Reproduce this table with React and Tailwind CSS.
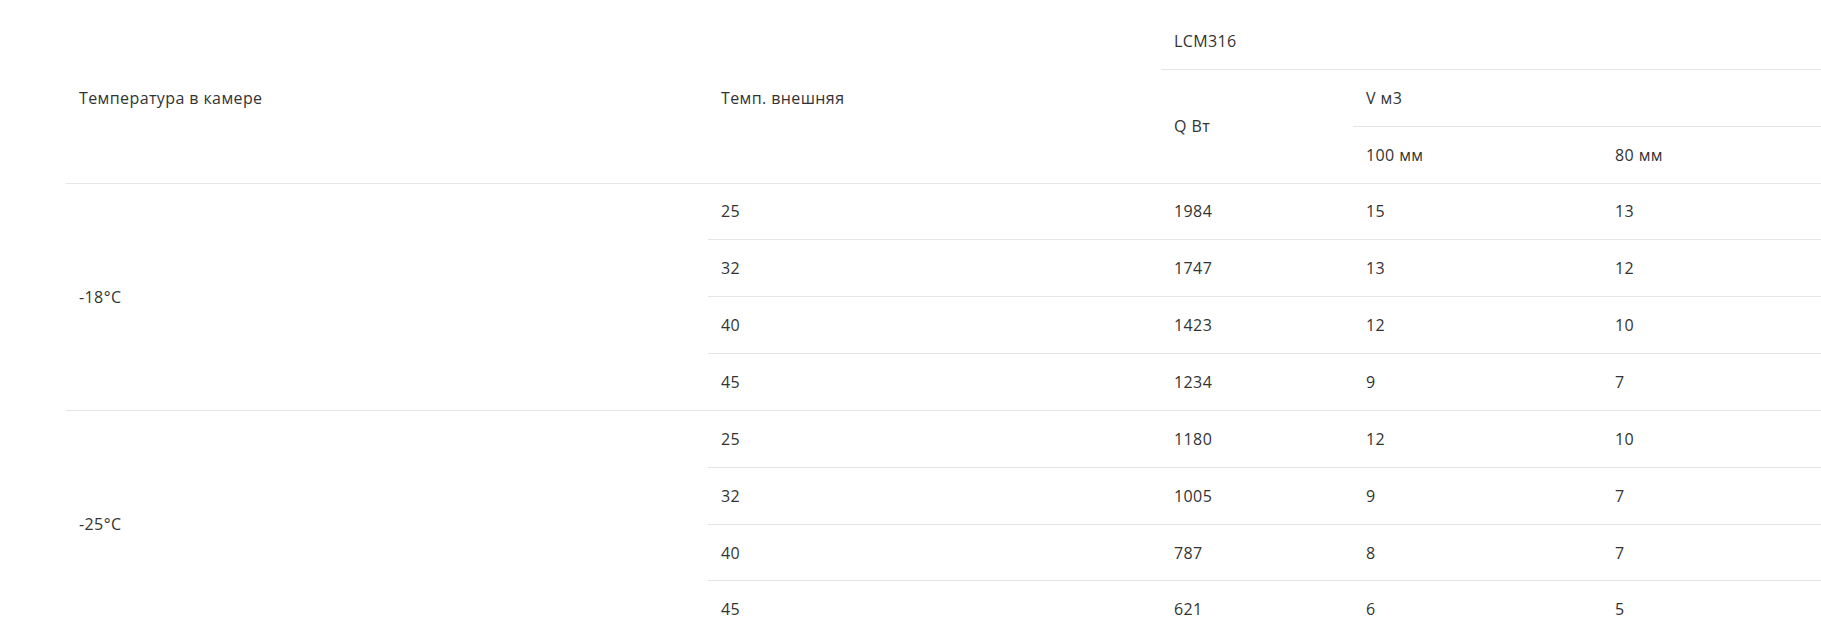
// App.jsx
const rows = [
  {
    temp: "-18°C",
    items: [
      ["25", "1984", "15", "13"],
      ["32", "1747", "13", "12"],
      ["40", "1423", "12", "10"],
      ["45", "1234", "9", "7"],
    ],
  },
  {
    temp: "-25°C",
    items: [
      ["25", "1180", "12", "10"],
      ["32", "1005", "9", "7"],
      ["40", "787", "8", "7"],
      ["45", "621", "6", "5"],
    ],
  },
];

const cell = "h-[56.85px] pl-[13px] pr-3 py-0 border-b border-[#e5e5e5] text-left align-middle font-normal";

const App = () => {
  return (
    <div className="h-screen overflow-hidden bg-white">
      <div className="pt-[13px] pl-[66px]">
        <table
          className="table-fixed border-separate border-spacing-0 text-[16px] tracking-[0.4px] text-[#333333]"
          style={{ width: 1755, fontFamily: '"Open Sans", sans-serif' }}
        >
          <colgroup>
            <col className="w-[642px]" />
            <col className="w-[453px]" />
            <col className="w-[192px]" />
            <col className="w-[249px]" />
            <col className="w-[219px]" />
          </colgroup>
          <thead>
            <tr>
              <th rowSpan={3} className={cell}>
                Температура в камере
              </th>
              <th rowSpan={3} className={cell}>
                Темп. внешняя
              </th>
              <th colSpan={3} className={cell}>
                LCM316
              </th>
            </tr>
            <tr>
              <th rowSpan={2} className={cell}>
                Q Вт
              </th>
              <th colSpan={2} className={cell}>
                V м3
              </th>
            </tr>
            <tr>
              <th className={cell}>100 мм</th>
              <th className={cell}>80 мм</th>
            </tr>
          </thead>
          <tbody>
            {rows.map((group) =>
              group.items.map((item, i) => (
                <tr key={group.temp + i}>
                  {i === 0 && (
                    <td rowSpan={group.items.length} className={cell}>
                      {group.temp}
                    </td>
                  )}
                  {item.map((value, j) => (
                    <td key={j} className={cell}>
                      {value}
                    </td>
                  ))}
                </tr>
              ))
            )}
          </tbody>
        </table>
      </div>
    </div>
  );
};

export default App;
